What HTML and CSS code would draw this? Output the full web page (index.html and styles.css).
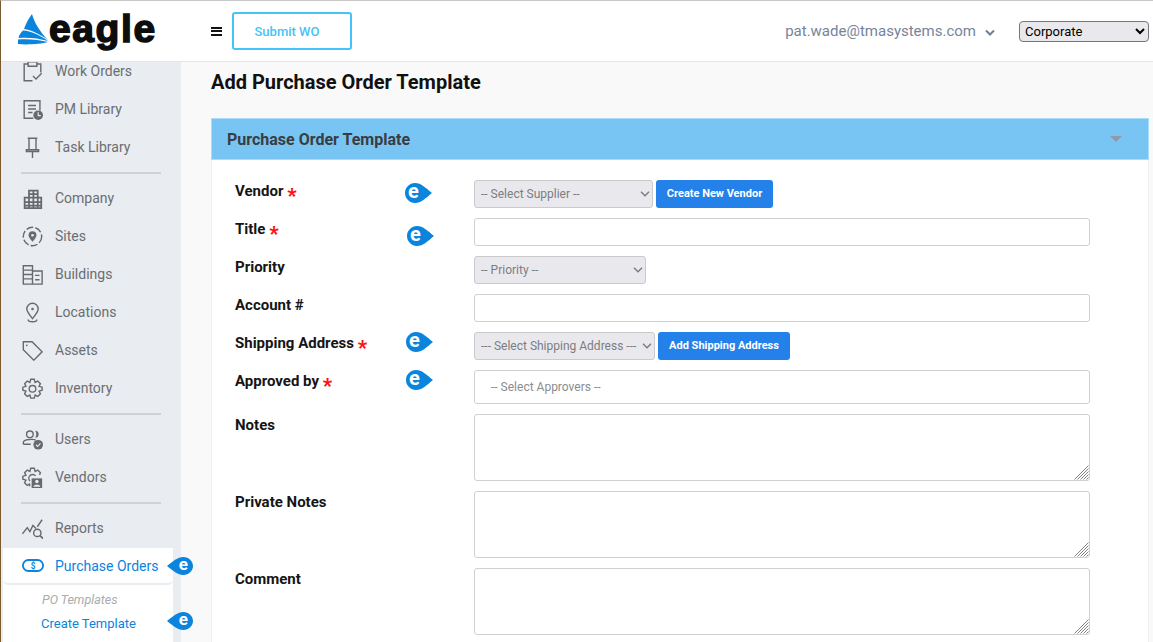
FILE: index.html
```html
<!DOCTYPE html>
<html lang="en">
<head>
<meta charset="utf-8">
<title>Add Purchase Order Template</title>
<link rel="stylesheet" href="styles.css">
</head>
<body>
<svg class="defs" width="0" height="0" aria-hidden="true">
  <symbol id="pin" viewBox="0 0 27 20" preserveAspectRatio="none">
    <path d="M10 0C16 0 21 5 27 10C21 15 16 20 10 20C4.500 20 0 15.500 0 10C0 4.500 4.500 0 10 0Z" fill="#0a84dc"/>
  </symbol>
  <symbol id="chev" viewBox="0 0 10 6">
    <path d="M1 .8L5 4.800L9 .8" fill="none" stroke="#77787c" stroke-width="1.300"/>
  </symbol>
  <symbol id="hatch" viewBox="0 0 15 15">
    <path d="M14.500 .5L.5 14.500M14.500 3.500L3.500 14.500M14.500 6.500L6.500 14.500M14.500 9.500L9.500 14.500M14.500 12.500L12.500 14.500" stroke="#808080" stroke-width="1" fill="none"/>
  </symbol>
</svg>
<div class="page">
  <header class="topbar">
    <a class="brand">
      <svg class="brand-mark" viewBox="0 0 32 32" aria-hidden="true">
        <path d="M15 1C17 9 23 19 31 27C23 21 14 17 7 16C9 10 12 5 15 1Z" fill="#0a84dc"/>
        <path d="M6 17.500C14 18 23 22 31 28C22 25 10 24 1.500 25C2 22 4 19.500 6 17.500Z" fill="#0a84dc"/>
        <path d="M1 26.500C11 25.500 23 27 31 29C24 31 10 32 1 31Z" fill="#0a84dc"/>
      </svg>
      <span class="brand-name">eagle</span>
    </a>
    <button class="burger" aria-label="Menu"><span></span><span></span><span></span></button>
    <button class="submit-wo">Submit WO</button>
    <div class="topbar-right">
      <span class="user-email">pat.wade@tmasystems.com</span>
      <svg class="user-caret" viewBox="0 0 10 7" aria-hidden="true"><path d="M1 1.500L5 5.500L9 1.500" fill="none" stroke="#6f7f96" stroke-width="2"/></svg>
      <select class="org-select"><option>Corporate</option></select>
    </div>
  </header>
  <div class="body-row">
    <aside class="sidebar">
      <ul class="nav nav-clipped">
        <li class="nav-item"><svg class="ico" viewBox="0 0 24 24"><path d="M7 3.500H2.500V22.500H12M17 3.500H21.500V13M7 1H17V6H7Z"/><path d="M12.500 17L16 20.500L22.500 14"/></svg>Work Orders</li>
        <li class="nav-item"><svg class="ico" viewBox="0 0 24 24"><path d="M13 22H2.500V2H20.500V13M7 7.500H16M7 11.500H16M7 15.500H12"/><circle class="solid" cx="18.500" cy="18.500" r="5.500"/><path class="knock" d="M18.500 15V19H21.500"/></svg>PM Library</li>
        <li class="nav-item"><svg class="ico" viewBox="0 0 24 24"><path d="M6.500 1.500H17.500M8 1.500V14M16 1.500V14M5 14.500H19V16.500H5ZM12 16.500V24"/></svg>Task Library</li>
      </ul>
      <hr class="nav-rule">
      <ul class="nav">
        <li class="nav-item"><svg class="ico" viewBox="0 0 24 24"><path class="thick" d="M3 23V11H8V3H18V11H22V23ZM8 11V23M13 3V23M18 11V23M8 7H18M3 16H22M3 20H22M8 11H18"/></svg>Company</li>
        <li class="nav-item"><svg class="ico" viewBox="0 0 24 24"><circle cx="12" cy="12" r="10.500" stroke-dasharray="8 2.500"/><path class="solid" d="M12 18C9 14.500 7.500 12.500 7.500 10.500A4.500 4.500 0 0 1 16.500 10.500C16.500 12.500 15 14.500 12 18Z"/><circle class="knock-fill" cx="12" cy="10.500" r="1.500"/></svg>Sites</li>
        <li class="nav-item"><svg class="ico" viewBox="0 0 24 24"><path d="M1.500 23V2H12V23ZM12 8H23V23H1.500M1.500 7H12M1.500 12H12M1.500 17H12M15 13H20M15 18H20"/></svg>Buildings</li>
        <li class="nav-item"><svg class="ico" viewBox="0 0 24 24"><path d="M12 19C8 14 5.500 11 5.500 8A6.500 6.500 0 0 1 18.500 8C18.500 11 16 14 12 19Z"/><circle class="solid" cx="12" cy="8" r="1.500"/><path d="M7 20C7 23.500 17 23.500 17 20"/></svg>Locations</li>
        <li class="nav-item"><svg class="ico" viewBox="0 0 24 24"><path d="M1.500 2H11.500L23 13.500L13.500 23L1.500 11Z"/><circle class="solid" cx="5.500" cy="6" r="1"/></svg>Assets</li>
        <li class="nav-item"><svg class="ico" viewBox="0 0 24 24"><path d="M10 1.500H14L15 5L18 3.500L21 6.500L19.500 9.500L23 10.500V14L19.500 15L21 18L18 21L15 19.500L14 23H10L9 19.500L6 21L3 18L4.500 15L1 14V10.500L4.500 9.500L3 6.500L6 3.500L9 5Z"/><circle cx="12" cy="12.300" r="3.800"/></svg>Inventory</li>
      </ul>
      <hr class="nav-rule">
      <ul class="nav">
        <li class="nav-item"><svg class="ico" viewBox="0 0 24 24"><circle cx="9" cy="6" r="3.800"/><path class="solid" d="M15 2A4 4 0 0 1 15 10C16.800 8 16.800 4 15 2Z"/><path d="M1.500 17.500V15.500C1.500 11.500 14 11 16 13M1.500 17.500H10"/><circle class="solid" cx="18.500" cy="18" r="5.500"/><path class="knock" d="M16 18L18 20L21 16.500"/></svg>Users</li>
        <li class="nav-item"><svg class="ico" viewBox="0 0 24 24"><path d="M9 22L8.500 19.500L6 21L3 18L4.500 15L1 14V10.500L4.500 9.500L3 6.500L6 3.500L9 5L10 1.500H14L15 5L18 3.500L21 6.500L20 9M9 16A4 4 0 0 1 15.500 10"/><path class="solid" d="M11 13H23V24H11Z"/><circle class="knock-fill" cx="17" cy="16.500" r="2"/><path class="knock-fill" d="M13 22.500C13 19.500 21 19.500 21 22.500Z"/></svg>Vendors</li>
      </ul>
      <hr class="nav-rule">
      <ul class="nav">
        <li class="nav-item"><svg class="ico" viewBox="0 0 24 24"><path d="M.5 18L6 11L9 15.500L12.500 8.500L16 12M17.500 10L23 2"/><circle cx="17.500" cy="17" r="4.200"/><path class="thick" d="M20.500 20L24 23.500"/></svg>Reports</li>
      </ul>
      <div class="nav-active-group">
        <div class="nav-item is-active"><svg class="ico ico-wide" viewBox="0 0 24 14"><rect x="1" y="1" width="22" height="12" rx="6"/><text class="dollar" x="12" y="10.500" text-anchor="middle">$</text></svg>Purchase Orders
          <svg class="pin pin-left"><use href="#pin"/></svg><span class="pin-e pin-e-left">e</span>
        </div>
        <div class="sub-head">PO Templates</div>
        <div class="sub-link">Create Template
          <svg class="pin pin-left"><use href="#pin"/></svg><span class="pin-e pin-e-left">e</span>
        </div>
      </div>
    </aside>
    <main class="content">
      <h1 class="page-title">Add Purchase Order Template</h1>
      <section class="card">
        <div class="card-head">
          <h2 class="card-title">Purchase Order Template</h2>
          <span class="card-caret"></span>
        </div>
        <form class="form">
          <div class="row">
            <label class="lbl">Vendor <span class="req">*</span></label>
            <span class="badge badge-vendor"><svg class="pin"><use href="#pin"/></svg><span class="pin-e">e</span></span>
            <div class="ctl"><span class="sel-wrap"><select class="sel sel-supplier"><option>-- Select Supplier --</option></select><svg class="chev"><use href="#chev"/></svg></span><button type="button" class="btn btn-vendor">Create New Vendor</button></div>
          </div>
          <div class="row">
            <label class="lbl">Title <span class="req">*</span></label>
            <span class="badge badge-title"><svg class="pin"><use href="#pin"/></svg><span class="pin-e">e</span></span>
            <input class="txt" type="text">
          </div>
          <div class="row">
            <label class="lbl">Priority</label>
            <span></span>
            <div class="ctl"><span class="sel-wrap"><select class="sel sel-priority"><option>-- Priority --</option></select><svg class="chev"><use href="#chev"/></svg></span></div>
          </div>
          <div class="row">
            <label class="lbl">Account #</label>
            <span></span>
            <input class="txt" type="text">
          </div>
          <div class="row">
            <label class="lbl">Shipping Address <span class="req">*</span></label>
            <span class="badge badge-mid"><svg class="pin"><use href="#pin"/></svg><span class="pin-e">e</span></span>
            <div class="ctl"><span class="sel-wrap"><select class="sel sel-ship"><option>--- Select Shipping Address ---</option></select><svg class="chev"><use href="#chev"/></svg></span><button type="button" class="btn btn-ship">Add Shipping Address</button></div>
          </div>
          <div class="row">
            <label class="lbl">Approved by <span class="req">*</span></label>
            <span class="badge badge-mid"><svg class="pin"><use href="#pin"/></svg><span class="pin-e">e</span></span>
            <div class="multi">-- Select Approvers --</div>
          </div>
          <div class="row">
            <label class="lbl">Notes</label><span></span>
            <div class="area-wrap"><textarea class="area"></textarea><svg class="hatch"><use href="#hatch"/></svg></div>
          </div>
          <div class="row">
            <label class="lbl">Private Notes</label><span></span>
            <div class="area-wrap"><textarea class="area"></textarea><svg class="hatch"><use href="#hatch"/></svg></div>
          </div>
          <div class="row">
            <label class="lbl">Comment</label><span></span>
            <div class="area-wrap"><textarea class="area"></textarea><svg class="hatch"><use href="#hatch"/></svg></div>
          </div>
        </form>
      </section>
    </main>
  </div>
</div>
</body>
</html>
```
FILE: styles.css
```css
* { box-sizing: border-box; }
html, body { margin: 0; height: 100%; overflow: hidden; }
body { font-family: Roboto, "Liberation Sans", sans-serif; background: #f9f9f9; color: #111; }
.defs { position: absolute; }
.page { height: 642px; display: flex; flex-direction: column; border-top: 1px solid #c8c8c8; border-left: 1px solid #7a5a2e; overflow: hidden; }

.topbar { height: 61px; flex: none; display: flex; align-items: center; background: #fff; border-bottom: 1px solid #e3e4e6; position: relative; z-index: 2; }
.brand { display: flex; align-items: center; width: 210px; padding-left: 16px; flex: none; }
.brand-mark { width: 32px; height: 32px; flex: none; margin-top: -5px; }
.brand-name { font-family: "Liberation Sans", sans-serif; font-weight: 700; font-size: 39px; line-height: 40px; color: #0d0d0d; -webkit-text-stroke: 1.5px #0d0d0d; letter-spacing: 1.6px; margin-top: -4px; }
.burger { width: 11px; height: 9px; padding: 0; border: 0; background: none; display: flex; flex-direction: column; justify-content: space-between; margin-right: 10px; flex: none; }
.burger span { display: block; height: 2px; background: #111; }
.submit-wo { width: 120px; height: 38px; padding: 0 10px 0 0; border: 2px solid #45c3f7; border-radius: 3px; background: #fff; color: #45c3f7; font: 500 13px Roboto, sans-serif; flex: none; }
.topbar-right { margin-left: auto; display: flex; align-items: center; padding-right: 4px; }
.user-email { color: #76849b; font-size: 15px; }
.user-caret { width: 10px; height: 7px; margin: 3px 0 0 9px; }
.org-select { width: 130px; height: 21px; margin-left: 24px; padding: 0 0 0 1px; font: 13px Roboto, sans-serif; color: #000; background-color: #e9e9ed; border: 1px solid #767676; border-radius: 4px; }

.body-row { flex: 1; min-height: 0; display: flex; }
.sidebar { width: 180px; flex: none; background: #e9ecf0; position: relative; z-index: 1; }
.nav { list-style: none; margin: 0; padding: 0; }
.nav-clipped { margin-top: -10px; }
.nav-item { height: 38px; display: flex; align-items: center; padding-left: 21px; color: #6b6e72; font-size: 14px; position: relative; }
.ico { width: 21px; height: 21px; margin-right: 12px; flex: none; fill: none; stroke: #66696d; stroke-width: 1.600; }
.ico .solid { fill: #66696d; stroke: none; }
.ico .knock { stroke: #e9ecf0; stroke-width: 1.300; fill: none; }
.ico .knock-fill { fill: #e9ecf0; stroke: none; }
.ico .thick { stroke-width: 2; }
.nav-rule { height: 2px; width: 140px; margin: 6px 0 5px 20px; border: 0; background: #d0d1d4; }

.nav-active-group { margin: 1px 0 0 2px; width: 170px; padding-bottom: 10px; background: #fff; position: relative; }
.nav-item.is-active { padding-left: 19px; height: 37px; color: #0a84dc; border-bottom: 2px solid #e9ecf0; border-radius: 0 0 5px 5px; }
.is-active .ico-wide { width: 22px; height: 13px; margin-right: 11px; stroke: #0a84dc; stroke-width: 2; }
.dollar { font: 700 9px Roboto, sans-serif; fill: #0a84dc; stroke: none; }
.sub-head { height: 24px; padding-left: 39px; display: flex; align-items: center; color: #a9abae; font-size: 12.500px; font-style: italic; margin-top: 2px; }
.sub-link { height: 24px; padding-left: 38px; display: flex; align-items: center; color: #0a84dc; font-size: 13px; position: relative; }

.pin { width: 27px; height: 20px; display: block; }
.pin-left { position: absolute; right: -20px; top: 50%; margin-top: -9px; width: 26px; height: 18px; transform: scaleX(-1); }
.pin-e { position: absolute; left: 3px; top: 50%; transform: translateY(-58%); color: #fff; font: 700 20px/20px Roboto, sans-serif; }
.pin-e-left { left: auto; right: -15px; font-size: 17px; line-height: 17px; }
.sub-link .pin-left { margin-top: -11px; }
.sub-link .pin-e-left { margin-top: -2px; }

.content { flex: 1; min-width: 0; padding: 0 4px 0 30px; }
.page-title { margin: 0; height: 56px; padding-top: 8px; font-size: 20px; line-height: 24px; font-weight: 700; color: #111; }
.card { background: #fff; border: 1px solid #eef0f6; border-top: 0; }
.card-head { height: 42px; margin: 0 -1px; display: flex; align-items: center; justify-content: space-between; padding: 0 26px 0 15px; background: #78c5f4; border: 1px solid #a8dcf9; }
.card-title { margin: 0; font-size: 16px; font-weight: 700; color: #3a3d40; }
.card-caret { width: 0; height: 0; border: 6px solid transparent; border-top: 6px solid #8d9aa8; border-bottom: 0; }

.form { padding: 20px 59px 10px 23px; display: flex; flex-direction: column; gap: 10px; }
.row { display: grid; grid-template-columns: 170px 69px 616px; align-items: start; }
.lbl { font-size: 15px; font-weight: 700; line-height: 22px; color: #151515; white-space: nowrap; }
.req { color: #f11; font-weight: 900; font-size: 20px; line-height: 14px; vertical-align: -7px; }
.badge { position: relative; display: block; width: 27px; height: 20px; }
.badge-vendor { margin-top: 3px; }
.badge-title { margin: 8px 0 0 2px; }
.badge-mid { margin-left: 1px; }
.ctl { display: flex; gap: 3px; }
.sel-wrap { position: relative; display: block; height: 28px; }
.sel { display: block; height: 28px; padding: 0 0 0 6px; appearance: none; font: 12px Roboto, sans-serif; color: #7c7d82; background-color: #e9e9ed; border: 1px solid #c9cacc; border-radius: 3px; }
.chev { position: absolute; right: 3px; top: 11px; width: 10px; height: 6px; pointer-events: none; }
.sel-supplier { width: 179px; }
.sel-priority { width: 172px; }
.sel-ship { width: 181px; }
.btn { height: 28px; border: 0; border-radius: 3px; background: #2481ea; color: #fff; font: 700 11px/28px Roboto, sans-serif; padding: 0; }
.btn-vendor { width: 117px; }
.btn-ship { width: 132px; }
.txt { width: 616px; height: 28px; border: 1px solid #cfd0d2; border-radius: 3px; background: #fff; }
.multi { width: 616px; height: 34px; border: 1px solid #cfd0d2; border-radius: 3px; display: flex; align-items: center; padding-left: 16px; font-size: 12px; color: #8b8d8f; background: #fff; }
.area-wrap { position: relative; width: 616px; height: 67px; }
.area { display: block; width: 616px; height: 67px; border: 1px solid #cfd0d2; border-radius: 3px; background: #fff; resize: none; }
.hatch { position: absolute; right: 1px; bottom: 1px; width: 15px; height: 15px; pointer-events: none; }
```
